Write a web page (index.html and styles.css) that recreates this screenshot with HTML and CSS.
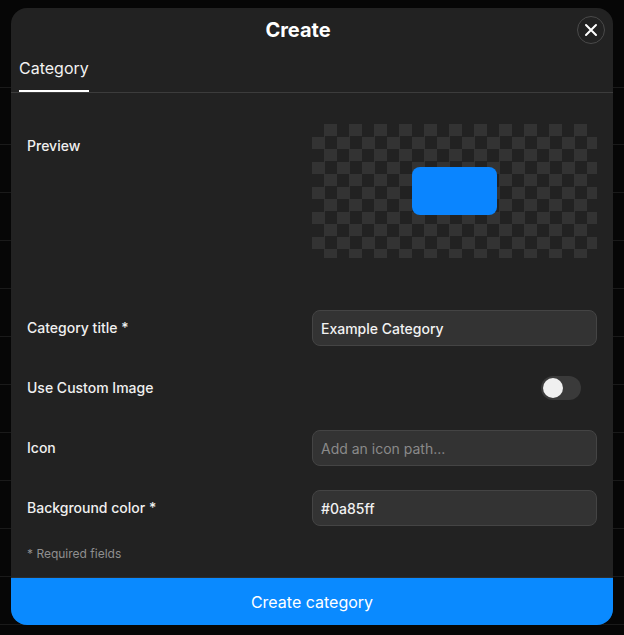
FILE: index.html
```html
<!DOCTYPE html>
<html lang="en">
<head>
<meta charset="utf-8">
<title>Create</title>
<link rel="stylesheet" href="styles.css">
</head>
<body>
<div class="modal">
  <div class="modal-header">
    <h1 class="modal-title">Create</h1>
    <button class="close-btn" aria-label="Close">
      <svg viewBox="0 0 14 14" width="14" height="14"><path d="M2 2L12 12M12 2L2 12" stroke="#fff" stroke-width="2" stroke-linecap="round"/></svg>
    </button>
  </div>
  <div class="tabs">
    <div class="tab active">Category</div>
  </div>
  <div class="content">
    <div class="row preview-row">
      <div class="label preview-label">Preview</div>
      <div class="checker">
        <div class="swatch"></div>
      </div>
    </div>
    <div class="row">
      <div class="label">Category title *</div>
      <div class="input">Example Category</div>
    </div>
    <div class="row">
      <div class="label">Use Custom Image</div>
      <div class="toggle-cell"><span class="toggle"><span class="knob"></span></span></div>
    </div>
    <div class="row">
      <div class="label">Icon</div>
      <div class="input placeholder">Add an icon path...</div>
    </div>
    <div class="row">
      <div class="label">Background color *</div>
      <div class="input">#0a85ff</div>
    </div>
    <div class="required">* Required fields</div>
  </div>
  <div class="footer">
    <button class="submit">Create category</button>
  </div>
</div>
</body>
</html>
```
FILE: styles.css
```css
* { box-sizing: border-box; }
html, body { margin: 0; padding: 0; }
body {
  height: 635px;
  background-color: #060606;
  background-image:
    linear-gradient(#1a1a1a, #1a1a1a),
    repeating-linear-gradient(to bottom, #1a1a1a 0 1px, transparent 1px 48px);
  background-size: 100% 1px, 100% 100%;
  background-position: 0 87px, 0 144px;
  background-repeat: no-repeat, no-repeat;
  font-family: Inter, "Noto Sans", sans-serif;
  color: #f2f2f2;
  padding: 8px 11px 0;
}
.modal {
  width: 602px;
  height: 617px;
  background: #222222;
  border-radius: 16px;
  overflow: hidden;
  display: flex;
  flex-direction: column;
}
.modal-header {
  position: relative;
  height: 44px;
  display: flex;
  align-items: center;
  justify-content: center;
  padding-right: 28px;
}
.modal-title {
  margin: 0;
  font-size: 20px;
  font-weight: 700;
  line-height: 24px;
  color: #fff;
}
.close-btn {
  position: absolute;
  right: 8px;
  top: 8px;
  width: 28px;
  height: 28px;
  border-radius: 50%;
  border: 1px solid #4a4a4a;
  background: transparent;
  padding: 0;
  display: flex;
  align-items: center;
  justify-content: center;
  cursor: pointer;
}
.close-btn svg { display: block; }
.tabs {
  height: 41px;
  padding: 0 8px;
  border-bottom: 1px solid #3c3c3c;
  display: flex;
}
.tab {
  font-size: 16px;
  line-height: 24px;
  padding: 4px 0 10px;
  color: #f2f2f2;
  border-bottom: 2px solid transparent;
}
.tab.active { border-bottom-color: #ffffff; }
.content {
  flex: 1;
  padding: 31px 16px 0;
  display: flex;
  flex-direction: column;
  gap: 24px;
}
.row {
  display: grid;
  grid-template-columns: 1fr 1fr;
  align-items: center;
  min-height: 36px;
}
.preview-row {
  align-items: start;
  margin-bottom: 28px;
}
.label {
  font-size: 14px;
  font-weight: 500;
  line-height: 18px;
  color: #f0f0f0;
}
.preview-label { margin-top: 13px; }
.checker {
  height: 134px;
  border-radius: 8px;
  background-color: #222;
  background-image: conic-gradient(#333333 0 25%, transparent 0 50%, #333333 0 75%, transparent 0);
  background-size: 25px 25px;
  display: flex;
  align-items: center;
  justify-content: center;
}
.swatch {
  width: 85px;
  height: 48px;
  border-radius: 8px;
  background: #0a85ff;
}
.input {
  height: 36px;
  border: 1px solid #444444;
  background: #333333;
  border-radius: 8px;
  padding: 0 8px;
  display: flex;
  align-items: center;
  font-size: 14px;
  font-weight: 500;
  color: #f2f2f2;
}
.input.placeholder { color: #8a8a8a; font-weight: 400; }
.toggle-cell {
  display: flex;
  justify-content: flex-end;
  padding-right: 16px;
}
.toggle {
  width: 40px;
  height: 24px;
  border-radius: 12px;
  background: #3a3a3a;
  display: flex;
  align-items: center;
  padding: 0 2px;
}
.knob {
  width: 20px;
  height: 20px;
  border-radius: 50%;
  background: #f0f0f0;
}
.required {
  margin-top: -4px;
  font-size: 12px;
  line-height: 16px;
  color: #8f8f8f;
}
.footer {
  border-top: 1px solid #2e2e2e;
}
.submit {
  display: block;
  width: 100%;
  height: 47px;
  border: 0;
  background: #0a8aff;
  color: #fff;
  font-family: Inter, "Noto Sans", sans-serif;
  font-size: 16px;
  font-weight: 400;
  cursor: pointer;
}
```
